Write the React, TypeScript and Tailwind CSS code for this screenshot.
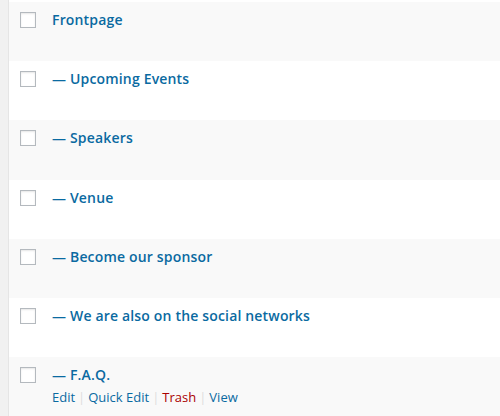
const pages = [
  "Frontpage",
  "— Upcoming Events",
  "— Speakers",
  "— Venue",
  "— Become our sponsor",
  "— We are also on the social networks",
  "— F.A.Q.",
];

function Checkbox() {
  return (
    <span className="block w-4 h-4 border border-[#b4b9be] bg-white shadow-[inset_0_1px_2px_rgba(0,0,0,0.1)]" />
  );
}

export default function App() {
  return (
    <div
      className="w-[500px] h-[416px] overflow-hidden flex bg-[#f1f1f1]"
      style={{ fontFamily: '"Open Sans", "Noto Sans", sans-serif' }}
    >
      {/* Left gutter */}
      <div className="w-2 shrink-0 bg-[#f1f1f1]" />
      <div className="flex-1 border-l border-[#e5e5e5] bg-white pt-[2px]">
        {pages.map((title, i) => (
          <div
            key={title}
            className={`flex h-[59.2px] ${i % 2 === 0 ? "bg-[#f9f9f9]" : "bg-white"}`}
          >
            <div className="w-[43px] shrink-0 pl-[11px] pt-[10px]">
              <Checkbox />
            </div>
            <div className="pt-[7px]">
              <div className="text-[14px] leading-[22px] font-semibold tracking-[0.17px] text-[#0a6aa1]">
                {title}
              </div>
              {i === pages.length - 1 && (
                <div className="text-[13px] leading-[20px] mt-[1px] text-[#0a6aa1]">
                  <span>Edit</span>
                  <span className="text-[#ddd] px-[3px]">|</span>
                  <span>Quick Edit</span>
                  <span className="text-[#ddd] px-[3px]">|</span>
                  <span className="text-[#a00]">Trash</span>
                  <span className="text-[#ddd] px-[3px]">|</span>
                  <span>View</span>
                </div>
              )}
            </div>
          </div>
        ))}
      </div>
    </div>
  );
}
